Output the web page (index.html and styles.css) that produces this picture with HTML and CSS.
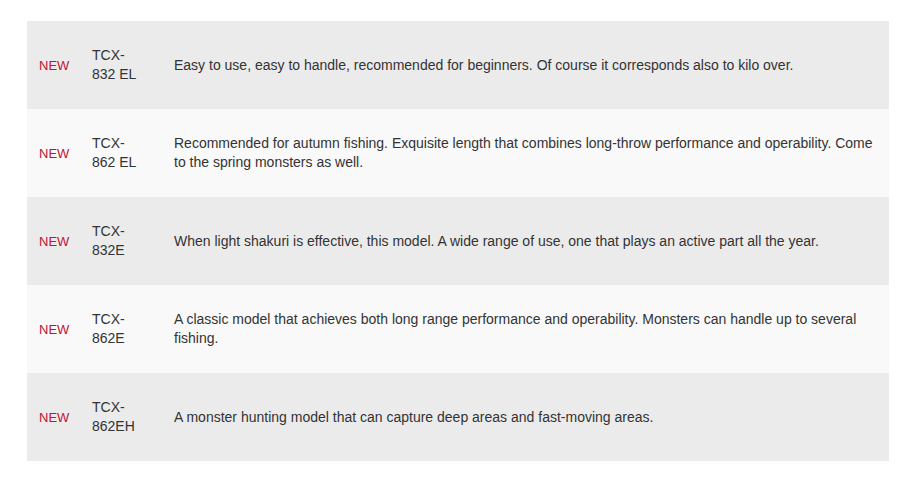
FILE: index.html
```html
<!DOCTYPE html>
<html>
<head>
<meta charset="utf-8">
<link rel="stylesheet" href="styles.css">
</head>
<body>
<div class="wrap">
<table class="models">
  <colgroup><col class="c-tag"><col class="c-name"><col class="c-desc"></colgroup>
  <tr><td class="tag">NEW</td><td class="name">TCX-<br>832 EL</td><td class="desc">Easy to use, easy to handle, recommended for beginners. Of course it corresponds also to kilo over.</td></tr>
  <tr><td class="tag">NEW</td><td class="name">TCX-<br>862 EL</td><td class="desc">Recommended for autumn fishing. Exquisite length that combines long-throw performance and operability. Come to the spring monsters as well.</td></tr>
  <tr><td class="tag">NEW</td><td class="name">TCX-<br>832E</td><td class="desc">When light shakuri is effective, this model. A wide range of use, one that plays an active part all the year.</td></tr>
  <tr><td class="tag">NEW</td><td class="name">TCX-<br>862E</td><td class="desc">A classic model that achieves both long range performance and operability. Monsters can handle up to several fishing.</td></tr>
  <tr><td class="tag">NEW</td><td class="name">TCX-<br>862EH</td><td class="desc">A monster hunting model that can capture deep areas and fast-moving areas.</td></tr>
</table>
</div>
</body>
</html>
```

FILE: styles.css
```css
html, body { margin: 0; padding: 0; background: #fff; }
.wrap { padding: 21px 33px 0 27px; }
.models {
  width: 862px;
  table-layout: fixed;
  border-collapse: collapse;
  font-family: "Liberation Sans", "Noto Sans CJK JP", sans-serif;
  font-size: 14px;
  line-height: 19px;
  color: #333;
}
.c-tag { width: 53px; }
.c-name { width: 82px; }
.models tr { height: 88px; }
.models tr:nth-child(odd) { background: #ebebeb; }
.models tr:nth-child(even) { background: #f9f9f9; }
.models td { padding: 0 12px; vertical-align: middle; }
.tag { color: #c4112f; font-size: 13px; }
.name { padding-top: 6px; }
.desc { padding-top: 6px; padding-right: 10px; }
```
